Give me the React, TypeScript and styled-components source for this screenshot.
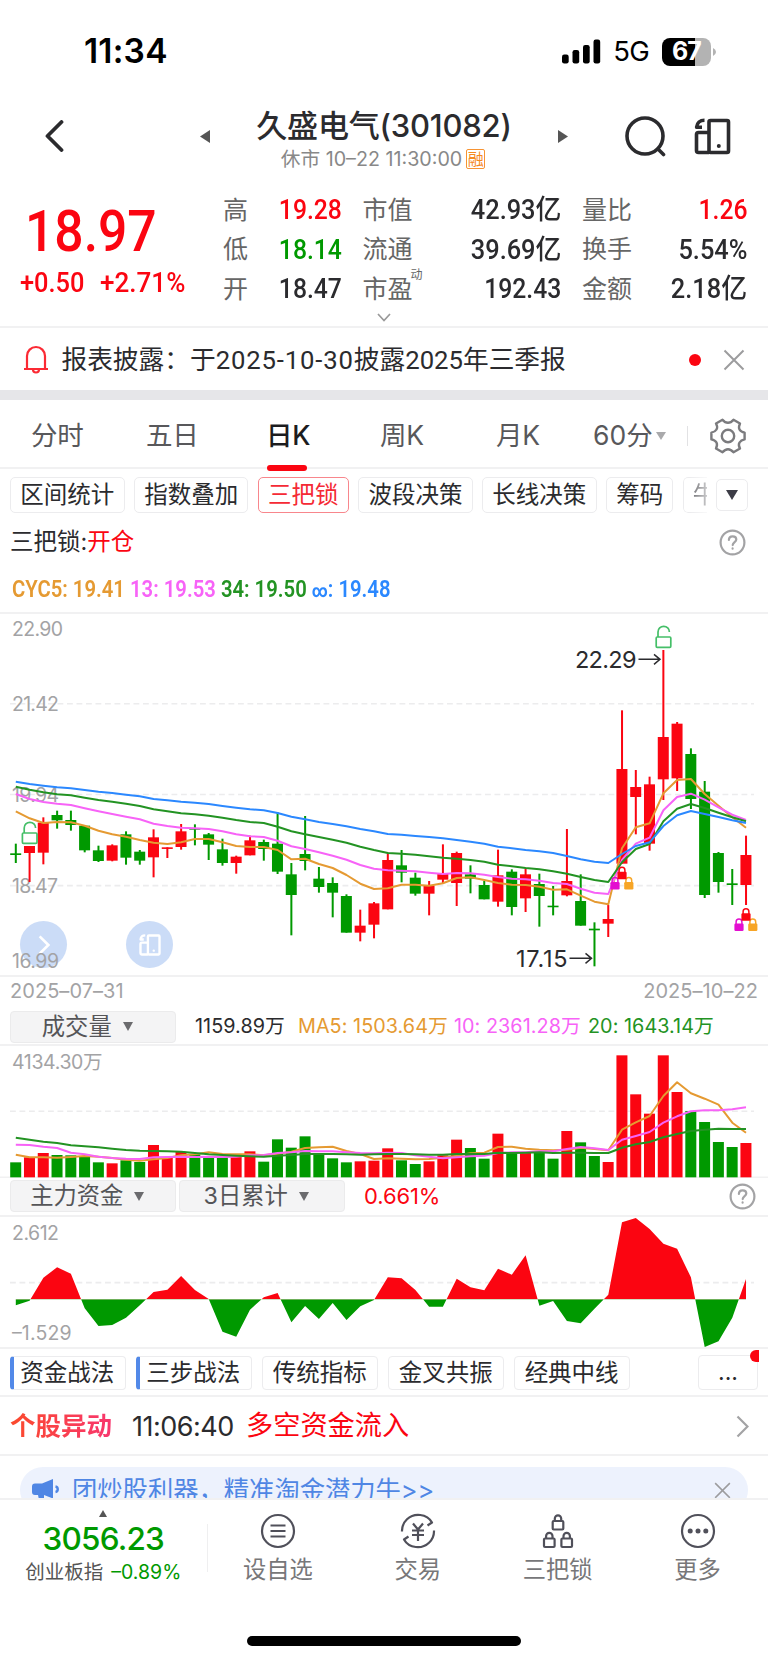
import React from 'react';
import styled, { createGlobalStyle, css } from 'styled-components';

const RED = '#fb0511';
const GREEN = '#009900';
const ORANGE = '#e59a32';
const PINK = '#f763f7';
const LINE_GREEN = '#239323';
const BLUE = '#2b88ff';
const INK = '#2b2b2e';
const HAIR = '#f1f1f2';
const SANS = `Inter, "Noto Sans CJK SC", sans-serif`;
const DIN = `Roboto, "Noto Sans CJK SC", sans-serif`;

const Global = createGlobalStyle`
  * { box-sizing: border-box; }
  body { margin: 0; background: #fff; }
  svg { display: block; flex: none; }
`;

const Page = styled.div`
  width: 768px; height: 1663px; overflow: hidden; background: #fff;
  display: flex; flex-direction: column; color: ${INK};
  font-family: ${SANS}; line-height: 1; white-space: nowrap;
`;

/* ---------- status bar and title ---------- */
const StatusBar = styled.header`
  height: 103px; flex: none; display: flex; align-items: center; padding: 0 52px 0 84px;
`;
const Clock = styled.div`
  font-size: 33.5px; font-weight: 600; color: #000; letter-spacing: 0.2px; margin-right: auto;
`;
const Network = styled.div`
  font-size: 27.5px; color: #000; margin: 0 13px 0 12.5px; letter-spacing: -0.8px;
`;
const Battery = styled.div`
  width: 49px; height: 28px; border-radius: 8px; display: grid; place-items: center;
  background: linear-gradient(90deg, #000 67%, #b3b3b3 67%);
  color: #fff; font-size: 25px; font-weight: 700; letter-spacing: -0.8px;
`;
const TitleBar = styled.div`
  height: 90px; flex: none; display: flex; align-items: center; padding: 0 37px 24px 45px;
`;
const PrevStock = styled.svg`
  margin-left: 135px;
`;
const NextStock = styled.svg`
  margin-right: auto;
`;
const SearchIcon = styled.svg`
  margin-right: 28px;
`;
const TitleBlock = styled.div`
  width: 348px; display: flex; flex-direction: column; align-items: center; padding-top: 9px;
`;
const Title = styled.h1`
  margin: 0; font-size: 31px; font-weight: 500; line-height: 36px; letter-spacing: -0.2px;
`;
const Subtitle = styled.div`
  display: flex; align-items: center; gap: 4px; font-size: 19.7px; line-height: 30px; color: #888; margin-left: -2px;
`;
const MarginBadge = styled.span`
  width: 19px; height: 20px; border: 1.5px solid #f79433; border-radius: 2px; color: #f58a1f;
  display: grid; place-items: center; font-size: 16px; line-height: 16px;
`;

/* ---------- quote ---------- */
const Quote = styled.section`
  height: 135px; flex: none; display: flex; border-bottom: 2px solid ${HAIR}; position: relative;
`;
const Condensed = styled.span<{ $x?: number; $from?: string }>`
  display: inline-block; font-family: ${DIN};
  transform: scaleX(${p => p.$x ?? 0.89}); transform-origin: ${p => p.$from ?? 'left'} center;
`;
const PriceBlock = styled.div`
  width: 223px; padding: 8px 0 0 20px; color: ${RED};
`;
const Price = styled.div`
  font-size: 58px; font-weight: 500; line-height: 58px; padding-left: 5px;
`;
const Change = styled.div`
  display: flex; font-size: 27px; font-weight: 500; line-height: 30px; margin-top: 8px;
  & > span { width: 79.5px; }
`;
const Stats = styled.div`
  display: grid; grid-template-columns: 118.5px 198.5px 165.5px; column-gap: 21px;
  grid-template-rows: repeat(3, 39.5px); margin-top: -2.5px; height: 119px;
`;
const Stat = styled.div`
  display: flex; justify-content: space-between; align-items: center;
`;
const StatLabel = styled.span`
  font-size: 25px; color: #666; position: relative;
`;
const Dynamic = styled.sup`
  position: absolute; left: 100%; top: -8px; font-size: 12px; line-height: 12px; margin-left: -2px;
`;
const StatValue = styled.span<{ $c?: string }>`
  font-size: 27px; font-weight: 500; color: ${p => p.$c ?? INK}; line-height: 39px;
  i { font-style: normal; font-size: 27.5px; line-height: 27px; }
`;
const MoreArrow = styled.div`
  position: absolute; left: 377px; bottom: 4px;
`;

/* ---------- notice ---------- */
const Notice = styled.section`
  height: 62px; flex: none; display: flex; align-items: center; padding: 1px 23px 0 23px;
`;
const NoticeText = styled.div`
  margin: 0 auto 0 12.5px; font-size: 25.7px; line-height: 34px;
  font-family: ${DIN};
  b { font-weight: 400; letter-spacing: 0.85px; }
`;
const Dot = styled.i`
  width: 12px; height: 12px; border-radius: 50%; background: ${RED}; margin-right: 22.5px;
`;
const Divider = styled.div`
  height: 10px; flex: none; background: #e6e6e9;
`;

/* ---------- tabs ---------- */
const Tabs = styled.nav`
  height: 69px; flex: none; display: flex; align-items: center; padding: 4px 22px 0 31px;
  border-bottom: 2px solid ${HAIR}; font-size: 26.5px; color: #58585b;
`;
const Tab = styled.div<{ $w: number; $on?: boolean }>`
  width: ${p => p.$w}px; height: 66px; display: flex; align-items: center;
  span { position: relative; letter-spacing: -0.3px; }
  ${p => p.$on && css`
    color: #1c1c1e; font-weight: 500;
    span::after {
      content: ''; position: absolute; left: 1px; right: 3px; bottom: -22px; height: 6px;
      border-radius: 3px; background: ${RED};
    }
  `}
`;
const Down = styled.i<{ $w?: number; $h?: number; $c?: string; $gap?: number }>`
  flex: none; border: solid transparent; border-width: ${p => p.$h ?? 9}px ${p => (p.$w ?? 11) / 2}px 0;
  border-top-color: ${p => p.$c ?? '#6b6b6e'}; margin-left: ${p => p.$gap ?? 0}px;
`;
const TabRule = styled.i`
  width: 1px; height: 20px; background: #e2e2e4; margin: 0 22px 0 auto;
`;

/* ---------- indicator chips ---------- */
const Chips = styled.div`
  height: 51px; flex: none; display: flex; align-items: center; padding: 1px 20px 0 10px;
`;
const Chip = styled.div<{ $on?: boolean; $w: number }>`
  width: ${p => p.$w}px; height: 36px; margin-right: 9.4px; border-radius: 5px; flex: none;
  border: 1.5px solid ${p => (p.$on ? '#f8868c' : '#ececee')};
  color: ${p => (p.$on ? '#f52a35' : INK)}; font-size: 23.5px; display: grid; place-items: center;
`;
const FadedChip = styled.div`
  width: 24px; height: 36px; overflow: hidden; border: 1.5px solid #ececee; border-right: 0;
  border-radius: 5px 0 0 5px; color: #6a6a6e; font-size: 23.5px; line-height: 33px; padding-left: 9px;
  mask-image: linear-gradient(90deg, #000 30%, rgba(0, 0, 0, 0.35));
`;
const ChipMore = styled.div`
  width: 32px; height: 32px; margin-left: auto; border: 1.5px solid #ececee; border-radius: 5px;
  display: grid; place-items: center;
`;
const Signal = styled.div`
  height: 44px; flex: none; display: flex; align-items: center; justify-content: space-between;
  padding: 0 22px 0 10px; font-size: 23.5px;
  b { font-weight: 400; color: ${RED}; }
`;
const Legend = styled.div`
  height: 49px; flex: none; display: flex; align-items: center; padding: 1px 0 0 12px;
  font-size: 24px; font-weight: 600;
`;
const Tint = styled.span<{ $c: string }>`
  color: ${p => p.$c};
  small { font-size: 18px; font-weight: 800; }
`;

/* ---------- charts ---------- */
const Panel = styled.section<{ $h: number }>`
  height: ${p => p.$h + 1}px; flex: none; position: relative; border-top: 2px solid ${HAIR}; margin-top: -1px;
  & > svg { margin-top: -1px; position: relative; z-index: 1; }
`;
const FloatButton = styled.div<{ $l: number }>`
  position: absolute; left: ${p => p.$l}px; top: 307px; width: 47px; height: 47px; border-radius: 50%;
  background: #cbdcf7; display: grid; place-items: center;
`;
const Dates = styled.div`
  height: 35px; flex: none; border-top: 2px solid ${HAIR}; display: flex; justify-content: space-between;
  align-items: center; padding: 0 10px 5px 10px; font-size: 20px; color: #a3a3a5; letter-spacing: 0.05px;
  margin-top: -1px;
`;
const PaneHead = styled.div<{ $h: number }>`
  height: ${p => p.$h}px; flex: none; display: flex; align-items: center; padding: 0 12px 2px 10px;
`;
const Picker = styled.div`
  width: 165.5px; height: 32px; margin-right: 3.5px; border: 1px solid #ebebec; border-radius: 4px;
  background: #f4f4f5; display: flex; align-items: center; justify-content: center; gap: 11px;
  font-size: 23.3px; color: #555558; padding-right: 11px;
`;
const Amounts = styled.div`
  display: flex; font-size: 19.8px; margin-left: 16px; letter-spacing: 0.05px;
`;
const Amount = styled.span<{ $c?: string; $w: number }>`
  width: ${p => p.$w}px; color: ${p => p.$c ?? INK};
`;
const Ratio = styled.span`
  color: ${RED}; font-size: 22px; margin: 0 auto 0 16px; letter-spacing: -0.1px;
`;

/* ---------- strategies ---------- */
const Strategies = styled.div`
  height: 48px; flex: none; display: flex; align-items: center; gap: 9.6px; padding: 1px 10px 0;
  border-top: 2px solid ${HAIR}; margin-top: -1px;
`;
const Strategy = styled.div<{ $mark?: boolean }>`
  width: 116.4px; height: 34px; border: 1.5px solid #ececee; border-radius: 4px; font-size: 23.5px;
  display: grid; place-items: center; padding-right: 1px;
  ${p => p.$mark && css`border-left: 4px solid #5289e8; padding-right: 5px;`}
`;
const More = styled.div`
  width: 60px; height: 35px; margin-left: auto; border: 1.5px solid #ececee; border-radius: 4px;
  position: relative; display: grid; place-items: center; font-size: 23px;
`;
const MoreDot = styled.i`
  position: absolute; right: -1.5px; top: -6px; width: 8.5px; height: 12px; background: ${RED};
  border-radius: 6px 0 0 6px;
`;
const Alert = styled.div`
  height: 61px; flex: none; display: flex; align-items: center; padding: 1px 19px 0 10px;
  border-top: 2px solid ${HAIR}; border-bottom: 2px solid ${HAIR};
`;
const AlertName = styled.b`
  font-size: 25.5px; line-height: 34px; font-weight: 700; margin-right: 20px;
  background: linear-gradient(90deg, #fb4a2c, #f8366e); background-clip: text; -webkit-background-clip: text;
  color: transparent;
`;
const AlertTime = styled.span`
  font-size: 27px; width: 114px; letter-spacing: -0.5px;
`;
const AlertText = styled.span`
  font-size: 27.2px; color: ${RED}; margin-right: auto;
`;
const BannerArea = styled.div`
  height: 42px; flex: none; overflow: hidden; padding: 11px 20px 0;
`;
const Banner = styled.div`
  height: 46px; border-radius: 23px; background: #edf2fd; display: flex; align-items: center;
  padding: 0 17px 0 12px; font-size: 25.3px; color: #4f86e4;
  span { margin: 0 auto 0 12px; }
`;

/* ---------- bottom bar ---------- */
const BottomBar = styled.footer`
  height: 118px; flex: none; border-top: 2px solid ${HAIR}; display: flex;
`;
const IndexBlock = styled.div`
  width: 206.5px; display: flex; flex-direction: column; align-items: center; color: ${GREEN};
  padding-top: 10px;
`;
const Up = styled.i`
  border: solid transparent; border-width: 0 4.5px 7px; border-bottom-color: #555;
`;
const IndexValue = styled.div`
  font-size: 31.5px; font-weight: 500; line-height: 44px; letter-spacing: -0.8px;
`;
const IndexName = styled.div`
  font-size: 19.5px; line-height: 24px; margin-top: -1px;
  span { color: #555; margin-right: 8px; }
`;
const BarRule = styled.i`
  width: 1.5px; height: 48px; background: #efeff0; margin-top: 24px;
`;
const NavItem = styled.div`
  width: 139.9px; display: flex; flex-direction: column; align-items: center; padding-top: 13px;
  font-size: 23.3px; color: #777779; gap: 9px;
`;
const Home = styled.div`
  width: 274px; height: 10px; border-radius: 5px; background: #000; margin: 20px auto 0; flex: none;
`;

/* ---------- icons ---------- */
const RotateIcon = ({ size = 37, color = INK, w = 3.6 }) => (
  <svg width={size} height={size} viewBox="0 0 37 37" fill="none" stroke={color} strokeWidth={w} strokeLinejoin="round">
    <rect x="15" y="2.500" width="19.500" height="32" rx="1.500" />
    <path d="M15 14.500H4.500a2 2 0 0 0-2 2v16a2 2 0 0 0 2 2h10.500" />
    <path d="M10.500 2.300C6 2.300 3 5 2.600 9.200H8" />
    <circle cx="24.800" cy="28" r="2" fill={color} stroke="none" />
  </svg>
);
const HelpIcon = () => (
  <svg width="27" height="27" viewBox="0 0 27 27" fill="none" stroke="#a3a3a5" strokeWidth="2.2" strokeLinecap="round">
    <circle cx="13.500" cy="13.500" r="11.900" />
    <path d="M9.900 10.900c0-2.200 1.500-3.600 3.700-3.600s3.700 1.300 3.700 3.200c0 2.500-3.600 2.800-3.600 5.600M13.600 19.400v.3" />
  </svg>
);
const CloseIcon = ({ s = 22 }) => (
  <svg width={s} height={s} viewBox="0 0 22 22" stroke="#9c9c9e" strokeWidth="2"><path d="M1.500 1.500l19 19M20.500 1.500l-19 19" /></svg>
);
const ChevronRight = ({ w = 13, h = 23, c = '#a3a3a5', sw = 2.2 }) => (
  <svg width={w} height={h} viewBox="0 0 13 23" fill="none" stroke={c} strokeWidth={sw}><path d="M1.500 1.500l10 10-10 10" /></svg>
);
const GearIcon = () => (
  <svg width="36" height="36" viewBox="0 0 36 36" fill="none" stroke="#7b7b7e" strokeWidth="2.400" strokeLinejoin="round">
    <path d="M12.500 1.700Q15 4.800 18 4.800T23.500 1.700L30 5.500Q28.300 9.200 29.500 11.500T34.600 14.600V21.400Q31 22 29.500 24.500T30 30.500L23.500 34.300Q21 31.200 18 31.200T12.500 34.300L6 30.500Q7.700 26.800 6.500 24.500T1.400 21.400V14.600Q5 14 6.500 11.500T6 5.500Z" />
    <circle cx="18" cy="18" r="6.200" />
  </svg>
);

/* ---------- chart data (vertical positions in thirds of a pixel) ---------- */
const px = (i: number) => 15.8 + i * 13.778;
const REDS = [1, 2, 7, 10, 11, 12, 16, 17, 25, 26, 27, 30, 31, 32, 35, 37, 40, 43, 44, 45, 46, 47, 48, 53];
const tone = (i: number) => (REDS.includes(i) ? RED : GREEN);
const CANDLES = [
  [731, 760, 765, 789], [738, 738, 759, 846], [652, 668, 758, 793], [632, 645, 661, 686], [632, 660, 675, 692],
  [675, 677, 751, 757], [737, 751, 783, 786], [733, 736, 782, 784], [694, 703, 773, 794], [750, 755, 782, 794],
  [688, 712, 772, 832], [742, 742, 746, 774], [672, 694, 741, 749], [673, 684, 689, 736], [699, 703, 734, 780],
  [716, 748, 789, 797], [767, 770, 789, 821], [707, 721, 766, 766], [719, 726, 747, 782], [637, 731, 815, 822],
  [789, 823, 885, 1006], [648, 762, 783, 811], [801, 836, 861, 878], [832, 849, 878, 952], [883, 888, 998, 998],
  [929, 977, 998, 1024], [906, 910, 974, 1015], [758, 780, 928, 928], [750, 796, 818, 847], [818, 833, 881, 887],
  [843, 857, 881, 946], [733, 822, 839, 850], [755, 759, 849, 918], [796, 823, 836, 880], [843, 855, 898, 898],
  [749, 826, 905, 920], [808, 815, 921, 946], [806, 823, 895, 936], [821, 852, 888, 980], [858, 917, 921, 946],
  [687, 843, 886, 889], [823, 903, 977, 977], [967, 986, 991, 1099], [915, 957, 971, 1011], [331, 507, 791, 791],
  [510, 561, 591, 703], [530, 553, 731, 752], [150, 411, 538, 600], [366, 371, 535, 573], [445, 462, 597, 627],
  [543, 575, 885, 894], [756, 759, 846, 878], [807, 850, 855, 915], [707, 765, 855, 915],
];
const CYC_BLUE = [545, 552, 557, 562, 565, 570, 575, 579, 584, 589, 597, 601, 605, 608, 612, 618, 623, 628, 631, 639, 650, 658, 666, 672, 679, 687, 694, 702, 704, 708, 711, 715, 720, 725, 731, 740, 745, 750, 754, 759, 768, 778, 785, 789, 762, 738, 727, 678, 646, 633, 642, 651, 661, 669];
const CYC_GREEN = [560, 569, 577, 583, 586, 593, 600, 605, 611, 618, 628, 634, 640, 643, 647, 653, 660, 666, 669, 680, 694, 703, 711, 719, 728, 740, 750, 759, 761, 764, 769, 773, 776, 780, 785, 794, 799, 804, 808, 814, 821, 831, 840, 846, 787, 747, 732, 664, 626, 612, 624, 638, 652, 664];
const CYC_PINK = [582, 597, 606, 611, 615, 625, 634, 642, 650, 658, 671, 678, 683, 685, 687, 694, 703, 709, 711, 722, 739, 747, 757, 767, 779, 795, 806, 811, 812, 814, 818, 822, 819, 820, 824, 831, 836, 838, 842, 849, 852, 866, 878, 882, 780, 731, 713, 631, 591, 581, 599, 622, 644, 660];
const CYC_ORANGE = [634, 655, 669, 666, 667, 677, 692, 703, 710, 720, 728, 732, 727, 717, 717, 727, 738, 741, 741, 750, 778, 776, 792, 804, 825, 851, 867, 865, 854, 854, 857, 850, 834, 832, 840, 849, 854, 855, 860, 869, 868, 887, 905, 913, 745, 682, 670, 580, 540, 537, 582, 617, 652, 683];
const VOLUME = [577, 562, 549, 555, 556, 558, 577, 580, 571, 576, 525, 563, 546, 553, 559, 562, 561, 544, 575, 508, 533, 499, 549, 565, 577, 574, 572, 535, 571, 582, 574, 556, 509, 534, 566, 491, 546, 546, 549, 566, 483, 517, 558, 576, 256, 373, 431, 256, 366, 423, 456, 516, 531, 519];
const MA_ORANGE = [554, 562, 562, 563, 561, 558, 560, 564, 569, 572, 568, 564, 556, 553, 547, 552, 553, 553, 556, 551, 545, 534, 532, 530, 543, 552, 567, 565, 566, 568, 567, 563, 557, 550, 548, 531, 530, 536, 539, 541, 539, 533, 537, 541, 479, 457, 438, 378, 337, 370, 386, 404, 458, 488];
const MA_PINK = [524, 525, 530, 534, 548, 553, 560, 564, 566, 567, 562, 561, 560, 561, 560, 561, 560, 556, 555, 549, 547, 543, 544, 544, 547, 549, 550, 548, 549, 556, 560, 565, 562, 559, 557, 549, 547, 547, 544, 544, 537, 531, 535, 540, 509, 498, 486, 458, 439, 424, 421, 421, 418, 412];
const MA_GREEN = [503, 509, 515, 519, 526, 529, 532, 536, 540, 542, 543, 544, 545, 549, 553, 555, 557, 559, 560, 557, 555, 552, 552, 552, 553, 554, 553, 552, 552, 553, 554, 554, 552, 552, 552, 548, 549, 548, 547, 549, 548, 548, 549, 549, 533, 523, 516, 502, 492, 483, 479, 476, 477, 477];
const FUNDS = [1006, 992, 923, 892, 911, 1015, 1068, 1065, 1043, 1006, 966, 959, 918, 960, 987, 1085, 1100, 1019, 982, 969, 1057, 1008, 1047, 999, 1050, 1009, 990, 922, 925, 960, 1010, 1010, 926, 952, 961, 896, 914, 856, 1007, 993, 1053, 1060, 1016, 974, 757, 744, 777, 821, 836, 922, 1131, 1114, 1043, 927];

const Curve = ({ data, off, c }: { data: number[]; off: number; c: string }) => (
  <polyline fill="none" stroke={c} strokeWidth="2" strokeLinejoin="round"
    points={data.map((v, i) => `${px(i).toFixed(1)},${(v / 3 + off).toFixed(1)}`).join(' ')} />
);
const Grid = ({ y }: { y: number }) => (
  <line x1="10" x2="754" y1={y} y2={y} stroke="#ececed" strokeWidth="1.600" strokeDasharray="5.800 3.700" />
);
const AxisText = ({ y, w, children, x = 12 }: { y: number; w: number; x?: number; children: string }) => (
  <text x={x} y={y} fontFamily={SANS} fontSize="19.500" fill="#a3a3a5" textLength={w}>{children}</text>
);
const OpenLock = ({ x, y }: { x: number; y: number }) => (
  <g transform={`translate(${x} ${y})`} fill="none" stroke="#45bf68" strokeWidth="1.700">
    <rect x="-7.300" y="11.500" width="14.600" height="10.300" rx="1" />
    <path d="M-5.500 11.500V6.500a5.700 5.700 0 0 1 11.400 0" />
  </g>
);
const ShutLock = ({ x, y, c }: { x: number; y: number; c: string }) => (
  <g transform={`translate(${x} ${y})`}>
    <path d="M-2.900 6V3.700a2.900 2.900 0 0 1 5.800 0V6" fill="none" stroke={c} strokeWidth="1.500" />
    <rect x="-4.600" y="5.300" width="9.200" height="7.400" rx="1.200" fill={c} />
  </g>
);
const LockTrio = ({ x, y }: { x: number; y: number }) => (
  <g>
    <ShutLock x={x - 7} y={y + 10.3} c="#e30ed0" />
    <ShutLock x={x + 6.8} y={y + 10.3} c="#f7a526" />
    <ShutLock x={x} y={y} c={RED} />
  </g>
);
const Callout = ({ x, y, tip, w, children }: { x: number; y: number; tip: number; w: number; children: string }) => (
  <g>
    <text x={x} y={y + 8.5} fontFamily={SANS} fontSize="23.500" fill={INK} textLength={w}>{children}</text>
    <path d={`M${x + w + 2} ${y}H${tip}M${tip - 6} ${y - 5}L${tip} ${y}L${tip - 6} ${y + 5}`} fill="none" stroke={INK} strokeWidth="1.500" />
  </g>
);

const CandleChart = () => (
  <svg width="768" height="363" viewBox="0 0 768 363">
    <Grid y={90.7} /><Grid y={181.5} /><Grid y={272.6} />
    <AxisText y={22.8} w={51}>22.90</AxisText>
    <AxisText y={98.4} w={47}>21.42</AxisText>
    <AxisText y={189} w={47}>19.94</AxisText>
    <AxisText y={280.4} w={46}>18.47</AxisText>
    <AxisText y={355} w={47}>16.99</AxisText>
    {CANDLES.map(([h, t, b, l], i) => (
      <g key={i} fill={tone(i)}>
        <rect x={px(i) - 1} y={h / 3 - 13} width="2" height={(l - h) / 3} />
        <rect x={px(i) - 5.6} y={t / 3 - 13} width="11" height={Math.max((b - t) / 3, 1.6)} />
      </g>
    ))}
    <Curve data={CYC_ORANGE} off={-13} c={ORANGE} />
    <Curve data={CYC_PINK} off={-13} c={PINK} />
    <Curve data={CYC_GREEN} off={-13} c={LINE_GREEN} />
    <Curve data={CYC_BLUE} off={-13} c={BLUE} />
    <OpenLock x={29.7} y={208.500} />
    <OpenLock x={663.5} y={12.5} />
    <LockTrio x={622} y={253.500} />
    <LockTrio x={746} y={295} />
    <Callout x={575} y={46.3} w={61.5} tip={660}>22.29</Callout>
    <Callout x={516} y={345.3} w={51.5} tip={591.500}>17.15</Callout>
  </svg>
);
const VolumeChart = () => (
  <svg width="768" height="133" viewBox="0 0 768 133">
    <Grid y={66.3} />
    <AxisText y={23.5} w={90.5}>4134.30万</AxisText>
    <rect x="0" y="131.500" width="768" height="1.500" fill={HAIR} />
    {VOLUME.map((v, i) => (
      <rect key={i} x={px(i) - 5.6} y={v / 3 - 75} width="11" height={(622 - v) / 3} fill={tone(i)} />
    ))}
    <Curve data={MA_ORANGE} off={-75} c={ORANGE} />
    <Curve data={MA_PINK} off={-75} c={PINK} />
    <Curve data={MA_GREEN} off={-75} c={LINE_GREEN} />
  </svg>
);
const FundChart = () => {
  const base = 83.2;
  const pts = `${px(0)},${base} ${FUNDS.map((v, i) => `${px(i).toFixed(1)},${(v / 3 - 246).toFixed(1)}`).join(' ')} ${px(53)},${base}`;
  return (
    <svg width="768" height="132" viewBox="0 0 768 132">
      <defs>
        <clipPath id="inflow"><rect x="0" y="0" width="768" height={base} /></clipPath>
        <clipPath id="outflow"><rect x="0" y={base} width="768" height="60" /></clipPath>
      </defs>
      <Grid y={66.600} />
      <AxisText y={23.800} w={47}>2.612</AxisText>
      <AxisText y={124} w={59.500}>–1.529</AxisText>
      <polygon points={pts} fill={RED} clipPath="url(#inflow)" />
      <polygon points={pts} fill={GREEN} clipPath="url(#outflow)" />
    </svg>
  );
};

const STATS: [string, string, string?, string?][] = [
  ['高', '19.28', '', RED], ['市值', '42.93', '亿'], ['量比', '1.26', '', RED],
  ['低', '18.14', '', GREEN], ['流通', '39.69', '亿'], ['换手', '5.54%'],
  ['开', '18.47'], ['市盈', '192.43'], ['金额', '2.18', '亿'],
];

const NavLock = ({ x, y }: { x: number; y: number }) => (
  <g transform={`translate(${x} ${y})`}>
    <rect x="-5.300" y="6" width="10.600" height="8.500" rx="1" />
    <path d="M-3.200 6V3.500a3.200 3.200 0 0 1 6.400 0V6" />
  </g>
);
const NAV = [
  ['设自选', <g key="a"><circle cx="18" cy="18" r="16" /><path d="M10.500 12.500h15M10.500 18h15M10.500 23.500h15" /></g>],
  ['交易', <g key="b"><path d="M2 18.500A16 16 0 0 1 7 6.300C14-.5 27 .5 32 9.500L27.500 12.500M34 17.500A16 16 0 0 1 29 29.700C22 36.500 9 35.500 4 26.500L8.500 23.500M13 10.500l5 6 5-6M18 16.500v11.500M12 17.500h12M12 22h12" /></g>],
  ['三把锁', <g key="c"><NavLock x={18} y={2} /><NavLock x={9.300} y={19.500} /><NavLock x={26.700} y={19.500} /></g>],
  ['更多', <g key="d"><circle cx="18" cy="18" r="16" /><g fill="#50505a" stroke="none"><circle cx="10.200" cy="18" r="2.500" /><circle cx="18" cy="18" r="2.500" /><circle cx="25.800" cy="18" r="2.500" /></g></g>],
] as const;

export default function App() {
  return (
    <Page>
      <Global />
      <StatusBar>
        <Clock>11:34</Clock>
        <svg width="39" height="25" viewBox="0 0 39 25"><rect x="0" y="15.500" width="6.700" height="9" rx="2.200" /><rect x="10.500" y="11" width="6.700" height="13.500" rx="2.200" /><rect x="21" y="6" width="6.700" height="18.500" rx="2.200" /><rect x="31.500" y="0.500" width="6.700" height="24" rx="2.200" /></svg>
        <Network>5G</Network>
        <Battery>67</Battery>
        <svg width="5" height="10" viewBox="0 0 5 10"><path d="M2 1Q5 2.500 5 5T2 9z" fill="#b3b3b3" /></svg>
      </StatusBar>
      <TitleBar>
        <svg width="20" height="32" viewBox="0 0 20 32" fill="none" stroke={INK} strokeWidth="3.800" strokeLinecap="round" strokeLinejoin="round"><path d="M16.500 2L2.500 16l14 14" /></svg>
        <PrevStock width="10" height="13" viewBox="0 0 10 13"><path d="M10 0v13L0 6.500z" fill="#555" /></PrevStock>
        <TitleBlock>
          <Title>久盛电气(301082)</Title>
          <Subtitle>休市 10–22 11:30:00<MarginBadge>融</MarginBadge></Subtitle>
        </TitleBlock>
        <NextStock width="10" height="13" viewBox="0 0 10 13"><path d="M0 0v13l10-6.500z" fill="#555" /></NextStock>
        <SearchIcon width="42" height="42" viewBox="0 0 42 42" fill="none" stroke={INK} strokeWidth="3.600" strokeLinecap="round"><circle cx="21" cy="21" r="18" /><path d="M34 34l5.500 5.500" /></SearchIcon>
        <RotateIcon />
      </TitleBar>
      <Quote>
        <PriceBlock>
          <Price><Condensed>18.97</Condensed></Price>
          <Change><span><Condensed $x={0.94}>+0.50</Condensed></span><span><Condensed $x={0.965}>+2.71%</Condensed></span></Change>
        </PriceBlock>
        <Stats>
          {STATS.map(([label, value, unit, c]) => (
            <Stat key={label}>
              <StatLabel>{label}{label === '市盈' && <Dynamic>动</Dynamic>}</StatLabel>
              <StatValue $c={c || undefined}><Condensed $from="right" $x={unit || value.endsWith('%') ? 0.94 : 0.915}>{value}{unit && <i>{unit}</i>}</Condensed></StatValue>
            </Stat>
          ))}
        </Stats>
        <MoreArrow><svg width="14" height="9" viewBox="0 0 14 9" fill="none" stroke="#999" strokeWidth="1.700"><path d="M1 1l6 6.500L13 1" /></svg></MoreArrow>
      </Quote>
      <Notice>
        <svg width="26" height="29" viewBox="0 0 26 29" fill="none" stroke="#fb2a34" strokeWidth="2.200"><path d="M1 24h24M4 24V11a9 9 0 0 1 18 0v13M10 24.500a3 3 0 0 0 6 0" /></svg>
        <NoticeText>报表披露：于<b>2025-10-30</b>披露2025年三季报</NoticeText>
        <Dot />
        <CloseIcon />
      </Notice>
      <Divider />
      <Tabs>
        <Tab $w={115}><span>分时</span></Tab>
        <Tab $w={120}><span>五日</span></Tab>
        <Tab $w={114} $on><span>日K</span></Tab>
        <Tab $w={116}><span>周K</span></Tab>
        <Tab $w={97}><span>月K</span></Tab>
        <span>60分</span><Down $w={11} $h={8} $c="#a9a9ab" $gap={3} />
        <TabRule />
        <GearIcon />
      </Tabs>
      <Chips>
        <Chip $w={114.500}>区间统计</Chip>
        <Chip $w={114.500}>指数叠加</Chip>
        <Chip $w={91} $on>三把锁</Chip>
        <Chip $w={114.500}>波段决策</Chip>
        <Chip $w={114.500}>长线决策</Chip>
        <Chip $w={67.500}>筹码</Chip>
        <FadedChip>牛</FadedChip>
        <ChipMore><Down $w={12} $h={10} $c="#3c3c46" /></ChipMore>
      </Chips>
      <Signal><span>三把锁:<b>开仓</b></span><HelpIcon /></Signal>
      <Legend>
        <Condensed $x={0.845}>
          <Tint $c={ORANGE}>CYC5: 19.41 </Tint><Tint $c={PINK}>13: 19.53 </Tint>
          <Tint $c={LINE_GREEN}>34: 19.50 </Tint><Tint $c={BLUE}><small>∞</small>: 19.48</Tint>
        </Condensed>
      </Legend>
      <Panel $h={363}>
        <CandleChart />
        <FloatButton $l={20}><ChevronRight w={12} h={20} c="#fff" sw={3} /></FloatButton>
        <FloatButton $l={126}><RotateIcon size={22} color="#fff" w={4} /></FloatButton>
      </Panel>
      <Dates><span>2025–07–31</span><span>2025–10–22</span></Dates>
      <PaneHead $h={35}>
        <Picker>成交量<Down /></Picker>
        <Amounts>
          <Amount $w={103}>1159.89万</Amount>
          <Amount $w={156}>
            <Tint $c={ORANGE}>MA5: 1503.64万</Tint>
          </Amount>
          <Amount $w={134} $c={PINK}>10: 2361.28万</Amount>
          <Amount $w={130} $c={LINE_GREEN}>20: 1643.14万</Amount>
        </Amounts>
      </PaneHead>
      <Panel $h={133}><VolumeChart /></Panel>
      <PaneHead $h={38}>
        <Picker>主力资金<Down /></Picker>
        <Picker>3日累计<Down /></Picker>
        <Ratio>0.661%</Ratio>
        <HelpIcon />
      </PaneHead>
      <Panel $h={132}><FundChart /></Panel>
      <Strategies>
        <Strategy $mark>资金战法</Strategy>
        <Strategy $mark>三步战法</Strategy>
        <Strategy>传统指标</Strategy>
        <Strategy>金叉共振</Strategy>
        <Strategy>经典中线</Strategy>
        <More>...<MoreDot /></More>
      </Strategies>
      <Alert>
        <AlertName>个股异动</AlertName>
        <AlertTime>11:06:40</AlertTime>
        <AlertText>多空资金流入</AlertText>
        <ChevronRight />
      </Alert>
      <BannerArea>
        <Banner>
          <svg width="28" height="25" viewBox="0 0 28 25" fill="#4f86e4"><path d="M3 5.500h7L21 1v19.500L12 17v7H7.500L6 17H3a3 3 0 0 1-3-3v-5.500a3 3 0 0 1 3-3z" /><path d="M23.500 8.500c3 .5 3 5 0 5.500" fill="none" stroke="#4f86e4" strokeWidth="2.400" /></svg>
          <span>团炒股利器，精准淘金潜力牛&gt;&gt;</span>
          <CloseIcon s={17} />
        </Banner>
      </BannerArea>
      <BottomBar>
        <IndexBlock>
          <Up />
          <IndexValue>3056.23</IndexValue>
          <IndexName><span>创业板指</span>–0.89%</IndexName>
        </IndexBlock>
        <BarRule />
        {NAV.map(([label, icon]) => (
          <NavItem key={label}>
            <svg width="36" height="36" viewBox="0 0 36 36" fill="none" stroke="#50505a" strokeWidth="2.200" strokeLinejoin="round">{icon}</svg>
            {label}
          </NavItem>
        ))}
      </BottomBar>
      <Home />
    </Page>
  );
}
